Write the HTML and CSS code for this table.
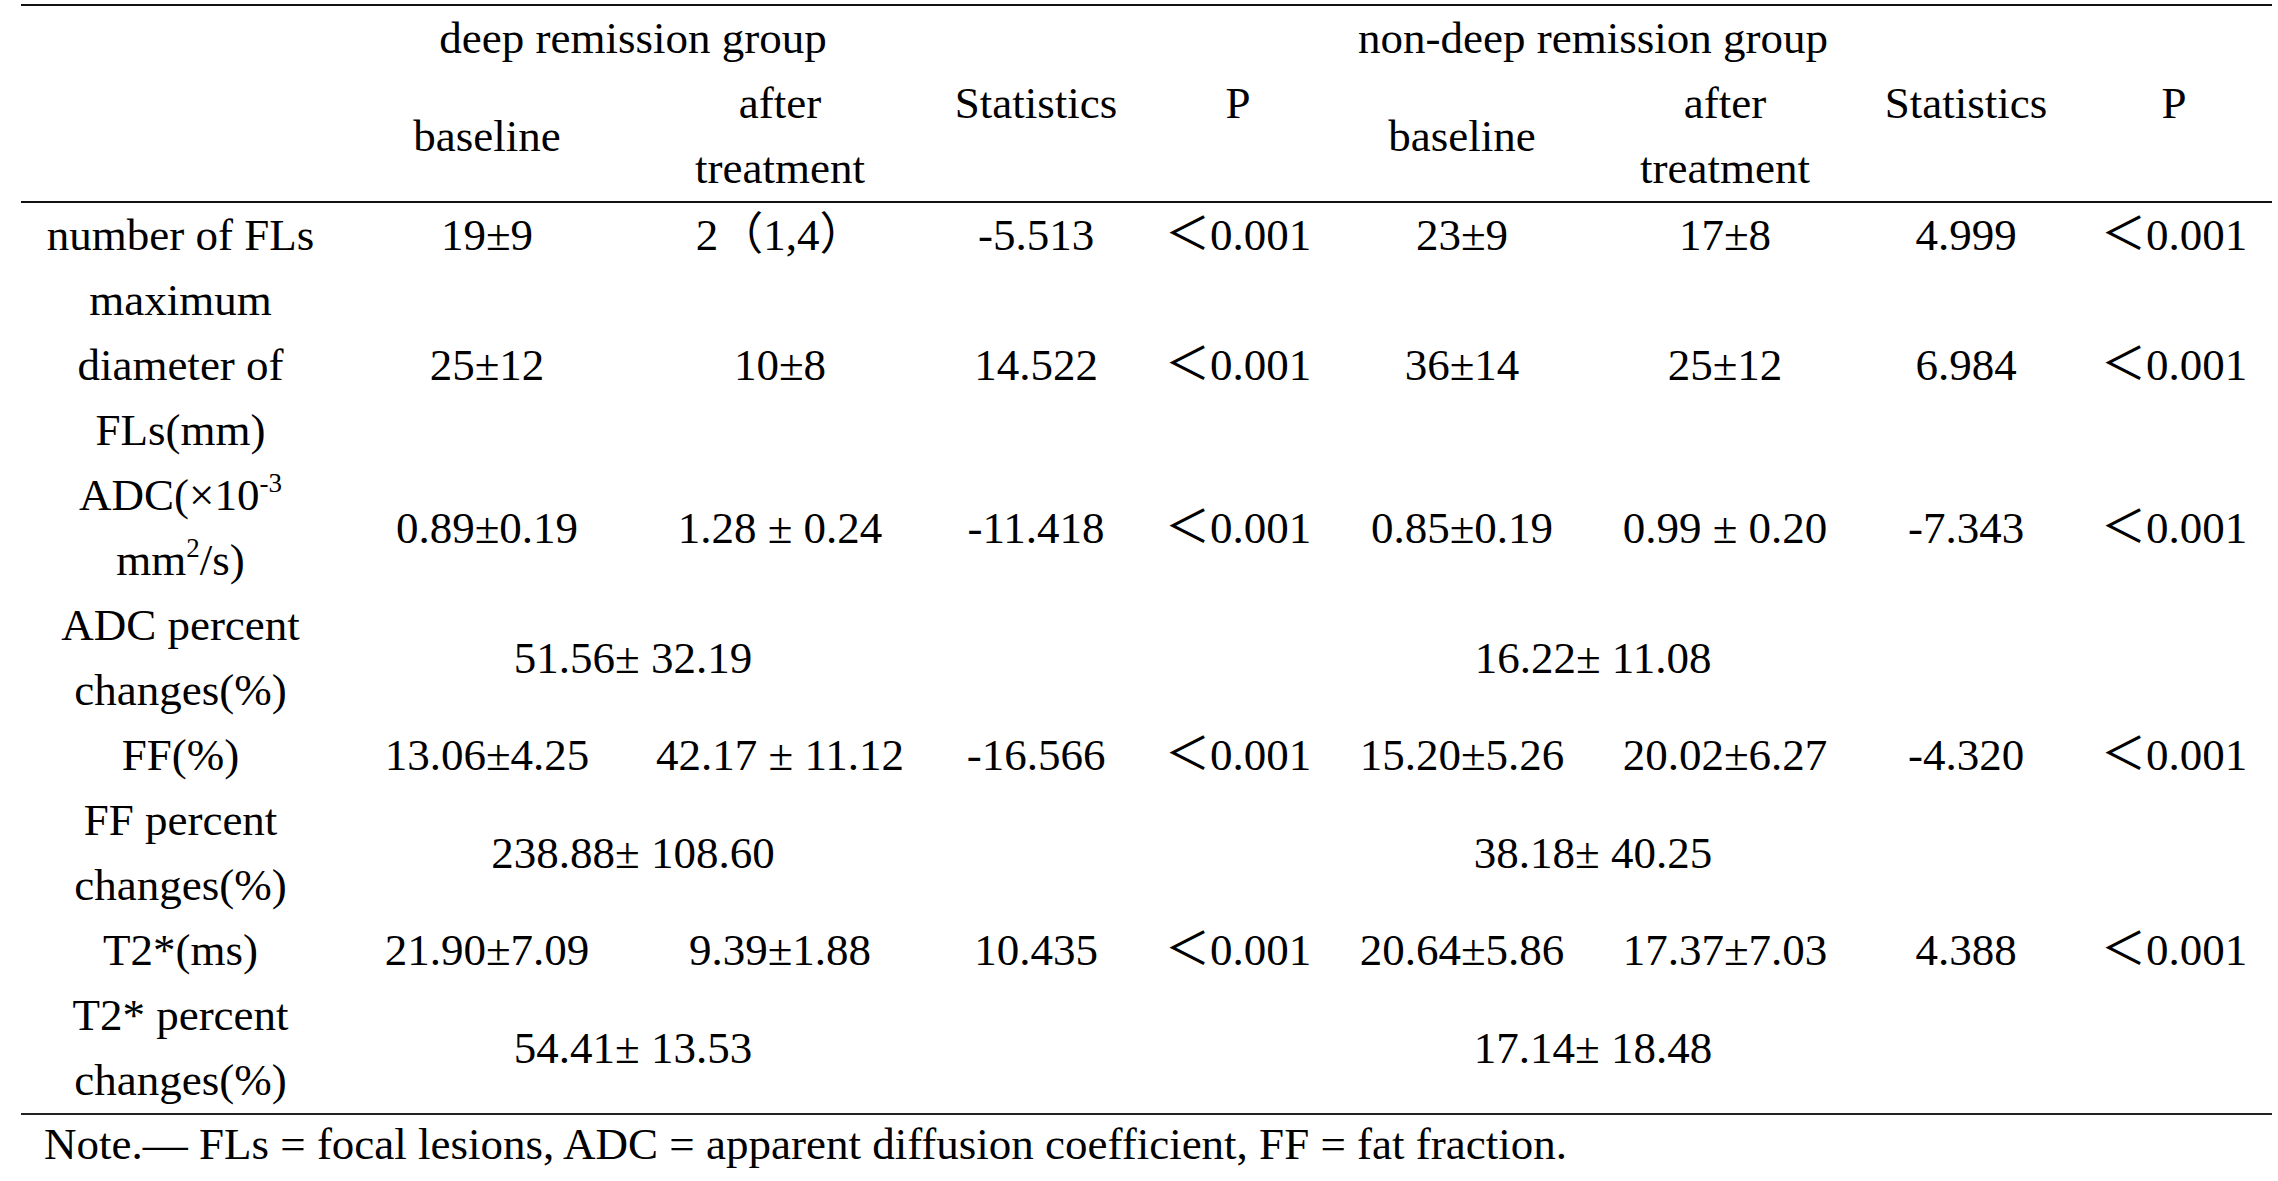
FILE: index.html
```html
<!DOCTYPE html>
<html lang="en">
<head>
<meta charset="utf-8">
<title>Table</title>
<link rel="stylesheet" href="styles.css">
</head>
<body>
<div class="page">
  <table class="data">
    <colgroup>
      <col class="c-label">
      <col class="c-b1">
      <col class="c-a1">
      <col class="c-s1">
      <col class="c-p1">
      <col class="c-b2">
      <col class="c-a2">
      <col class="c-s2">
      <col class="c-p2">
    </colgroup>
    <thead>
      <tr class="h-row1">
        <th></th>
        <th colspan="2">deep remission group</th>
        <th></th>
        <th></th>
        <th colspan="2">non-deep remission group</th>
        <th></th>
        <th></th>
      </tr>
      <tr class="h-row2">
        <th></th>
        <th class="mid">baseline</th>
        <th class="top">after<br>treatment</th>
        <th class="top">Statistics</th>
        <th class="top">P</th>
        <th class="mid">baseline</th>
        <th class="top">after<br>treatment</th>
        <th class="top">Statistics</th>
        <th class="top">P</th>
      </tr>
    </thead>
    <tbody>
      <tr>
        <td>number of FLs</td>
        <td>19±9</td>
        <td>2（1,4）</td>
        <td>-5.513</td>
        <td>＜0.001</td>
        <td>23±9</td>
        <td>17±8</td>
        <td>4.999</td>
        <td>＜0.001</td>
      </tr>
      <tr>
        <td>maximum<br>diameter of<br>FLs(mm)</td>
        <td>25±12</td>
        <td>10±8</td>
        <td>14.522</td>
        <td>＜0.001</td>
        <td>36±14</td>
        <td>25±12</td>
        <td>6.984</td>
        <td>＜0.001</td>
      </tr>
      <tr>
        <td>ADC(×10<sup>-3</sup><br>mm<sup>2</sup>/s)</td>
        <td>0.89±0.19</td>
        <td>1.28 ± 0.24</td>
        <td>-11.418</td>
        <td>＜0.001</td>
        <td>0.85±0.19</td>
        <td>0.99 ± 0.20</td>
        <td>-7.343</td>
        <td>＜0.001</td>
      </tr>
      <tr>
        <td>ADC percent<br>changes(%)</td>
        <td colspan="2">51.56± 32.19</td>
        <td></td>
        <td></td>
        <td colspan="2">16.22± 11.08</td>
        <td></td>
        <td></td>
      </tr>
      <tr>
        <td>FF(%)</td>
        <td>13.06±4.25</td>
        <td>42.17 ± 11.12</td>
        <td>-16.566</td>
        <td>＜0.001</td>
        <td>15.20±5.26</td>
        <td>20.02±6.27</td>
        <td>-4.320</td>
        <td>＜0.001</td>
      </tr>
      <tr>
        <td>FF percent<br>changes(%)</td>
        <td colspan="2">238.88± 108.60</td>
        <td></td>
        <td></td>
        <td colspan="2">38.18± 40.25</td>
        <td></td>
        <td></td>
      </tr>
      <tr>
        <td>T2*(ms)</td>
        <td>21.90±7.09</td>
        <td>9.39±1.88</td>
        <td>10.435</td>
        <td>＜0.001</td>
        <td>20.64±5.86</td>
        <td>17.37±7.03</td>
        <td>4.388</td>
        <td>＜0.001</td>
      </tr>
      <tr>
        <td>T2* percent<br>changes(%)</td>
        <td colspan="2">54.41± 13.53</td>
        <td></td>
        <td></td>
        <td colspan="2">17.14± 18.48</td>
        <td></td>
        <td></td>
      </tr>
    </tbody>
  </table>
  <p class="note">Note.— FLs = focal lesions, ADC = apparent diffusion coefficient, FF = fat fraction.</p>
</div>
</body>
</html>
```

FILE: styles.css
```css
html, body {
  margin: 0;
  padding: 0;
  background: #ffffff;
}

body {
  font-family: "Liberation Serif", "Noto Sans CJK SC", serif;
  font-size: 45px;
  color: #000000;
}

.page {
  padding: 4px 0 0 21px;
}

.data {
  width: 2251px;
  table-layout: fixed;
  border-collapse: collapse;
  border-top: 2px solid #111111;
  border-bottom: 2px solid #222222;
}

.c-label { width: 319px; }
.c-b1 { width: 294px; }
.c-a1 { width: 292px; }
.c-s1 { width: 220px; }
.c-p1 { width: 184px; }
.c-b2 { width: 264px; }
.c-a2 { width: 262px; }
.c-s2 { width: 220px; }
.c-p2 { width: 196px; }

.data th,
.data td {
  padding: 0;
  font-weight: normal;
  text-align: center;
  vertical-align: middle;
  line-height: 65px;
  white-space: nowrap;
}

.data thead tr.h-row2 th {
  height: 130px;
}

.data thead tr.h-row1 th {
  height: 65px;
}

.data thead tr.h-row2 {
  border-bottom: 2px solid #111111;
}

.data th.top {
  vertical-align: top;
}

.data th.mid {
  vertical-align: middle;
}

.data sup {
  font-size: 0.6em;
  line-height: 0;
  vertical-align: 0.65em;
}

.note {
  margin: 0;
  padding-left: 23px;
  line-height: 58px;
}
```
